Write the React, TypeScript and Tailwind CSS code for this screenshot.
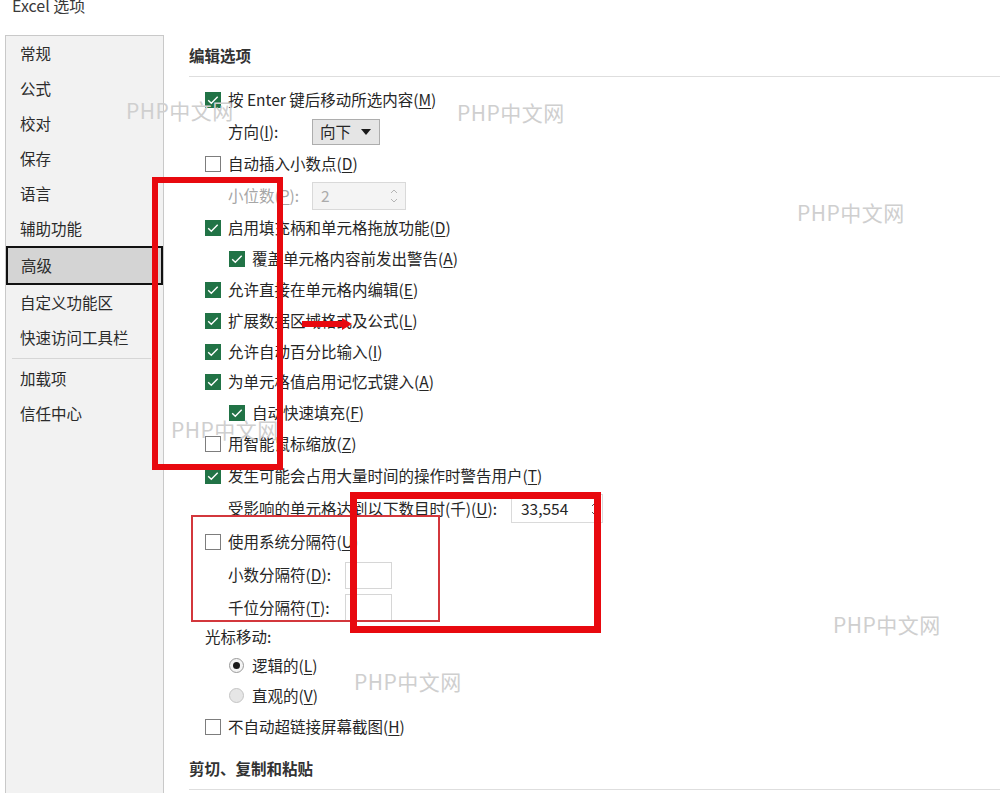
import React from 'react'

const font = "font-['Microsoft_YaHei','Noto_Sans_CJK_SC',sans-serif]"

function Box({ checked }: { checked?: boolean }) {
  if (checked) {
    return (
      <span className="w-4 h-4 shrink-0 bg-[#217346] flex items-center justify-center">
        <svg viewBox="0 0 16 16" className="w-4 h-4">
          <path d="M3.2 8.2l3.1 3.1 6.4-6.6" stroke="#fff" strokeWidth="1.4" fill="none" />
        </svg>
      </span>
    )
  }
  return <span className="w-4 h-4 shrink-0 border border-[#7d7d7d] bg-white" />
}

function Radio({ checked }: { checked?: boolean }) {
  if (checked) {
    return (
      <span className="w-[15px] h-[15px] shrink-0 rounded-full border border-[#9a9a9a] bg-[#f4f4f4] flex items-center justify-center">
        <span className="w-[7px] h-[7px] rounded-full bg-[#1a1a1a]" />
      </span>
    )
  }
  return <span className="w-[15px] h-[15px] shrink-0 rounded-full border border-[#c4c4c4] bg-[#e6e6e6]" />
}

function Spin({ color }: { color: string }) {
  return (
    <svg viewBox="0 0 10 22" className="w-[10px] h-[22px]">
      <path d="M2 8l3-3 3 3" stroke={color} strokeWidth="1" fill="none" />
      <path d="M2 14l3 3 3-3" stroke={color} strokeWidth="1" fill="none" />
    </svg>
  )
}

// label with underlined access key, e.g. ('按 Enter 键后移动所选内容', 'M')
function L({ text, k, after = '' }: { text: string; k: string; after?: string }) {
  return (
    <span className="whitespace-nowrap">
      {text}(<span className="underline underline-offset-2">{k}</span>){after}
    </span>
  )
}

type Row = {
  h: number
  kind: 'check' | 'label' | 'radio' | 'plain'
  level?: 1 | 2
  checked?: boolean
  content: React.ReactNode
}

const sideItems = ['常规', '公式', '校对', '保存', '语言', '辅助功能']
const sideItems2 = ['自定义功能区', '快速访问工具栏']
const sideItems3 = ['加载项', '信任中心']

const watermarks = [
  'left-[126px] top-[97px]',
  'left-[457px] top-[99px]',
  'left-[797px] top-[199px]',
  'left-[171px] top-[416px]',
  'left-[833px] top-[611px]',
  'left-[354px] top-[668px]',
]

export default function App() {
  const rows: Row[] = [
    { h: 32, kind: 'check', checked: true, content: <L text="按 Enter 键后移动所选内容" k="M" /> },
    {
      h: 31,
      kind: 'label',
      content: (
        <>
          <span className="w-[84px] shrink-0"><L text="方向" k="I" after=":" /></span>
          <span className="w-[68px] h-[26px] border border-[#adadad] bg-[#e5e5e5] flex items-center justify-between pl-[7px] pr-[8px]">
            <span>向下</span>
            <svg viewBox="0 0 10 6" className="w-[10px] h-[6px]"><path d="M0 0h10L5 6z" fill="#1a1a1a" /></svg>
          </span>
        </>
      ),
    },
    { h: 33, kind: 'check', checked: false, content: <L text="自动插入小数点" k="D" /> },
    {
      h: 32,
      kind: 'label',
      content: (
        <>
          <span className="w-[84px] shrink-0 text-[#a6a6a6]"><L text="小位数" k="P" after=":" /></span>
          <span className="w-[94px] h-[28px] border border-[#d9d9d9] bg-[#f4f4f4] flex items-center justify-between pl-[8px] pr-[6px] text-[#ababab]">
            <span>2</span>
            <Spin color="#b5b5b5" />
          </span>
        </>
      ),
    },
    { h: 31, kind: 'check', checked: true, content: <L text="启用填充柄和单元格拖放功能" k="D" /> },
    { h: 31, kind: 'check', level: 2, checked: true, content: <L text="覆盖单元格内容前发出警告" k="A" /> },
    { h: 31, kind: 'check', checked: true, content: <L text="允许直接在单元格内编辑" k="E" /> },
    { h: 31, kind: 'check', checked: true, content: <L text="扩展数据区域格式及公式" k="L" /> },
    { h: 31, kind: 'check', checked: true, content: <L text="允许自动百分比输入" k="I" /> },
    { h: 30, kind: 'check', checked: true, content: <L text="为单元格值启用记忆式键入" k="A" /> },
    { h: 31, kind: 'check', level: 2, checked: true, content: <L text="自动快速填充" k="F" /> },
    { h: 31, kind: 'check', checked: false, content: <L text="用智能鼠标缩放" k="Z" /> },
    { h: 33, kind: 'check', checked: true, content: <L text="发生可能会占用大量时间的操作时警告用户" k="T" /> },
    {
      h: 33,
      kind: 'label',
      content: (
        <>
          <span className="w-[283px] shrink-0"><L text="受影响的单元格达到以下数目时(千)" k="U" after=":" /></span>
          <span className="w-[92px] h-[29px] border border-[#dadada] bg-white flex items-center justify-between pl-[9px] pr-[2px]">
            <span>33,554</span>
            <Spin color="#555" />
          </span>
        </>
      ),
    },
    { h: 33, kind: 'check', checked: false, content: <L text="使用系统分隔符" k="U" /> },
    {
      h: 34,
      kind: 'label',
      content: (
        <>
          <span className="w-[117px] shrink-0"><L text="小数分隔符" k="D" after=":" /></span>
          <span className="w-[47px] h-[27px] border border-[#d6d6d6] bg-white" />
        </>
      ),
    },
    {
      h: 31,
      kind: 'label',
      content: (
        <>
          <span className="w-[117px] shrink-0"><L text="千位分隔符" k="T" after=":" /></span>
          <span className="w-[47px] h-[27px] border border-[#d6d6d6] bg-white" />
        </>
      ),
    },
    { h: 28, kind: 'plain', content: <span>光标移动:</span> },
    { h: 29, kind: 'radio', checked: true, content: <L text="逻辑的" k="L" /> },
    { h: 31, kind: 'radio', checked: false, content: <L text="直观的" k="V" /> },
    { h: 32, kind: 'check', checked: false, content: <L text="不自动超链接屏幕截图" k="H" /> },
  ]

  return (
    <div className={`relative w-[1000px] h-[793px] overflow-hidden bg-white text-[15.5px] text-[#262626] ${font}`}>
      <div className="h-[35px] pl-[12px] flex items-start">
        <div className="-mt-[5px] text-[16px] leading-[20px] text-[#3a3a3a]">Excel 选项</div>
      </div>

      <div className="flex">
        <aside className="ml-[5px] w-[159px] h-[780px] shrink-0 border border-[#c9c9c9] bg-[#f2f2f2] text-[#2b2b2b]">
          {sideItems.map(s => (
            <div key={s} className="h-[35px] pl-[14px] flex items-center">{s}</div>
          ))}
          <div className="h-[39px] pl-[13px] flex items-center bg-[#d4d4d4] border-2 border-[#111]">高级</div>
          {sideItems2.map(s => (
            <div key={s} className="h-[35px] pl-[14px] flex items-center">{s}</div>
          ))}
          <div className="h-[6px] pt-[3px]">
            <div className="ml-[6px] mr-[12px] h-px bg-[#d6d6d6]" />
          </div>
          {sideItems3.map(s => (
            <div key={s} className="h-[35px] pl-[14px] flex items-center">{s}</div>
          ))}
        </aside>

        <main className="ml-[25px] flex-1">
          <div className="h-[41px] flex items-center font-bold text-[#333]">编辑选项</div>
          <div className="h-px bg-[#dedede]" />
          <div className="mt-[7px]">
            {rows.map((r, i) => {
              if (r.kind === 'check') {
                return (
                  <div
                    key={i}
                    style={{ height: r.h }}
                    className={`flex items-center gap-[7px] ${r.level === 2 ? 'pl-[40px]' : 'pl-[16px]'}`}
                  >
                    <Box checked={r.checked} />
                    {r.content}
                  </div>
                )
              }
              if (r.kind === 'radio') {
                return (
                  <div key={i} style={{ height: r.h }} className="flex items-center gap-[8px] pl-[40px]">
                    <Radio checked={r.checked} />
                    {r.content}
                  </div>
                )
              }
              if (r.kind === 'plain') {
                return (
                  <div key={i} style={{ height: r.h }} className="flex items-center pl-[16px]">
                    {r.content}
                  </div>
                )
              }
              return (
                <div key={i} style={{ height: r.h }} className="flex items-center pl-[39px]">
                  {r.content}
                </div>
              )
            })}
          </div>
          <div className="mt-[6px] h-[40px] flex items-center font-bold text-[#333]">剪切、复制和粘贴</div>
          <div className="h-px bg-[#dedede]" />
        </main>
      </div>

      {watermarks.map(p => (
        <div key={p} className={`absolute ${p} text-[21px] leading-[26px] text-[#cfcfcf] tracking-[0.5px] pointer-events-none`}>
          PHP中文网
        </div>
      ))}

      {/* red annotations */}
      <div className="absolute left-[152px] top-[177px] w-[131px] h-[293px] border-[6px] border-[#e8090f]" />
      <svg className="absolute left-[302px] top-[316px]" width="52" height="16" viewBox="0 0 52 16">
        <path d="M0 5h40V2l10 6-10 6v-3H0z" fill="#e8090f" />
      </svg>
      <div className="absolute left-[191px] top-[515px] w-[249px] h-[107px] border-2 border-[#d3373c]" />
      <div className="absolute left-[350px] top-[492px] w-[251px] h-[141px] border-[7px] border-[#e8090f]" />
    </div>
  )
}
